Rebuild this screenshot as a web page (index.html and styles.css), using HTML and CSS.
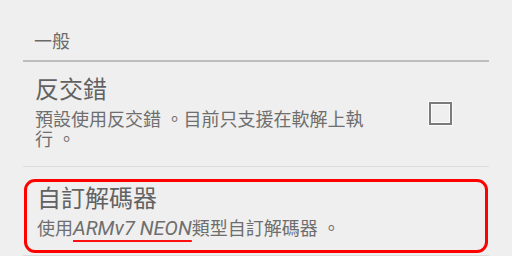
FILE: index.html
```html
<!DOCTYPE html>
<html lang="zh-Hant">
<head>
<meta charset="utf-8">
<link rel="stylesheet" href="styles.css">
</head>
<body>
<div class="screen">
  <div class="category">一般</div>
  <div class="pref pref-first">
    <div class="pref-text">
      <div class="pref-title">反交錯</div>
      <div class="pref-summary">預設使用反交錯 。目前只支援在軟解上執行 。</div>
    </div>
    <div class="checkbox"></div>
  </div>
  <div class="highlight">
    <div class="pref pref-marked">
      <div class="pref-text">
        <div class="pref-title">自訂解碼器</div>
        <div class="pref-summary">使用<span class="mark">ARMv7 NEON</span>類型自訂解碼器 。</div>
      </div>
    </div>
  </div>
  <div class="divider-bottom"></div>
</div>
</body>
</html>
```

FILE: styles.css
```css
html, body {
  margin: 0;
  padding: 0;
  background: #efefef;
}

body {
  width: 512px;
  height: 256px;
  overflow: hidden;
  font-family: Roboto, "Noto Sans CJK TC", sans-serif;
}

.screen {
  padding: 0 23px;
}

.category {
  padding: 31px 0 7px 11px;
  font-size: 18px;
  line-height: 22px;
  color: #6a6a6a;
  border-bottom: 2px solid #bdbdbd;
}

.pref {
  display: flex;
  align-items: center;
}

.pref-first {
  padding: 14px 0 16px 12px;
  border-bottom: 1px solid #dcdcdc;
}

.pref-text {
  width: 343px;
}

.pref-title {
  font-size: 24px;
  line-height: 28px;
  color: #626262;
}

.pref-summary {
  margin-top: 6px;
  font-size: 18px;
  line-height: 20px;
  color: #6e6e6e;
}

.checkbox {
  width: 19px;
  height: 19px;
  margin-left: 51px;
  border: 2px solid #7b7b7b;
  box-shadow: 0 0 0 1px #fbfbfb, inset 0 0 0 1px #fbfbfb;
}

.highlight {
  margin: 12px 1px 0 1px;
  border: 3px solid #ff0000;
  border-radius: 11px;
}

.pref-marked {
  padding: 3px 0 11px 10px;
}

.pref-marked .pref-summary {
  margin-top: 5px;
}

.mark {
  font-size: 20px;
  font-style: italic;
  text-decoration: underline;
  text-decoration-color: #ff1010;
  text-decoration-thickness: 2px;
  text-underline-offset: 5px;
}

.divider-bottom {
  margin-top: 2px;
  border-top: 1px solid #dcdcdc;
}
```
